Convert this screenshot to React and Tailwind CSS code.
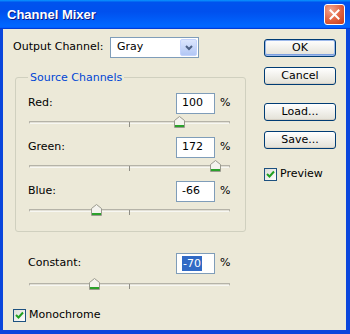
import React from 'react';

const font = { fontFamily: '"DejaVu Sans", Tahoma, sans-serif' };

function Thumb() {
    return (
        <svg width="11" height="12" viewBox="0 0 11 12">
            <path d="M0.5 4.5 L5.5 0.5 L10.5 4.5 L10.5 11.5 L0.5 11.5 Z" fill="#F4F3EE" stroke="#9A9A8E" />
            <rect x="1" y="9" width="9" height="2" fill="#2BA12B" />
        </svg>
    );
}

function Slider({ value, trackTop = 7 }) {
    // range -200..200, track 201px wide
    const left = Math.round(100 + (value / 200) * 100);
    return (
        <div className="relative h-[23px] w-[201px]">
            <div className="absolute left-0 right-0 h-[3px] rounded-[1px] border border-[#B5B3A8] border-b-[#F7F7F2] bg-[#E2E0D6]" style={{ top: trackTop }} />
            <div className="absolute left-[100px] w-px h-[5px] bg-[#8F8E86]" style={{ top: trackTop + 1 }} />
            <div className="absolute" style={{ left: left - 5, top: trackTop - 5 }}>
                <Thumb />
            </div>
        </div>
    );
}

function ValueBox({ value, selected }) {
    return (
        <div className="w-[39px] h-[21px] bg-white border border-[#7F9DB9] flex items-center pl-[5px]">
            {selected ? (
                <span className="bg-[#316AC5] text-white leading-[15px] px-px">{value}</span>
            ) : (
                <span>{value}</span>
            )}
        </div>
    );
}

function Channel({ label, value, selected, trackTop }) {
    return (
        <div className="flex flex-col">
            <div className="flex items-center h-[21px]">
                <span className="w-[148px]">{label}</span>
                <ValueBox value={value} selected={selected} />
                <span className="ml-[5px]">%</span>
            </div>
            <div className="ml-[1px]">
                <Slider value={value} trackTop={trackTop} />
            </div>
        </div>
    );
}

function Check({ label }) {
    return (
        <div className="flex items-center h-[14px]">
            <div className="w-[13px] h-[13px] border border-[#1C5180] bg-gradient-to-br from-[#DCDCD7] to-white flex items-center justify-center">
                <svg width="9" height="9" viewBox="0 0 9 9">
                    <path d="M1 4 L3.5 6.5 L8 1.5" fill="none" stroke="#21A121" strokeWidth="2" />
                </svg>
            </div>
            <span className="ml-[3px]">{label}</span>
        </div>
    );
}

function XpButton({ children, isDefault }) {
    return (
        <button
            className={
                'w-[72px] h-[18px] rounded-[3px] border border-[#003C74] bg-gradient-to-b from-white to-[#E3E1D7] flex items-center justify-center text-[11px] text-black ' +
                (isDefault ? 'shadow-[inset_0_0_0_1px_#9DB9EB,inset_0_-1px_0_1px_#7B9FE0]' : 'shadow-[inset_0_-1px_0_#D6D0C5]')
            }
        >
            {children}
        </button>
    );
}

export default function App() {
    return (
        <div className="w-[350px] h-[334px] flex flex-col bg-[#0A46DC] text-[11px] text-black" style={font}>
            {/* Title bar */}
            <div className="h-[29px] flex items-center justify-between pl-[7px] pr-[5px] bg-[linear-gradient(180deg,#0997ff,#0053ee_8%,#0050ee_40%,#0066ff_88%,#0066ff_93%,#005bff_95%,#003dd7_96%,#003dd7)]">
                <span
                    className="text-white font-bold text-[13px] [text-shadow:1px_1px_0_#0A1883]"
                    style={{ fontFamily: '"Liberation Sans", Arial, sans-serif' }}
                >
                    Channel Mixer
                </span>
                <div className="w-[21px] h-[21px] rounded-[3px] border border-white bg-[radial-gradient(circle_at_30%_25%,#F2A48D,#E0603E_55%,#C23A1A)] flex items-center justify-center">
                    <svg width="11" height="11" viewBox="0 0 11 11">
                        <path d="M1.5 1.5 L9.5 9.5 M9.5 1.5 L1.5 9.5" stroke="white" strokeWidth="2" strokeLinecap="square" />
                    </svg>
                </div>
            </div>

            {/* Body */}
            <div className="flex-1 ml-[3px] mr-[4px] mb-[4px] bg-[#ECE9D8] flex">
                <div className="w-[261px] pl-[10px] pt-[8px] flex flex-col">
                    <div className="flex items-center h-[21px]">
                        <span className="w-[97px]">Output Channel:</span>
                        <div className="w-[89px] h-[21px] bg-white border border-[#7F9DB9] flex items-center">
                            <span className="flex-1 pl-[6px]">Gray</span>
                            <div className="w-[17px] h-[17px] mr-px rounded-[2px] border border-[#C3D3FD] bg-gradient-to-b from-[#DCE6FE] to-[#B2C7F5] flex items-center justify-center">
                                <svg width="8" height="6" viewBox="0 0 8 6">
                                    <path d="M1 1 L4 4 L7 1" fill="none" stroke="#4D6185" strokeWidth="2" />
                                </svg>
                            </div>
                        </div>
                    </div>

                    <div className="relative ml-[2px] mt-[19px] w-[231px] border border-[#D0D0BF] rounded-[3px] pt-[15px] pb-[6px] pl-[12px]">
                        <span className="absolute left-[12px] -top-[7px] px-[2px] bg-[#ECE9D8] text-[#0046D5] leading-[13px]">
                            Source Channels
                        </span>
                        <Channel label="Red:" value={100} />
                        <Channel label="Green:" value={172} />
                        <Channel label="Blue:" value={-66} />
                    </div>

                    <div className="mt-[21px] pl-[15px]">
                        <Channel label="Constant:" value={-70} selected trackTop={9} />
                    </div>

                    <div className="mt-[11px]">
                        <Check label="Monochrome" />
                    </div>
                </div>

                <div className="flex flex-col pt-[10px]">
                    <XpButton isDefault>OK</XpButton>
                    <div className="mt-[10px]"><XpButton>Cancel</XpButton></div>
                    <div className="mt-[18px]"><XpButton>Load...</XpButton></div>
                    <div className="mt-[10px]"><XpButton>Save...</XpButton></div>
                    <div className="mt-[18px]"><Check label="Preview" /></div>
                </div>
            </div>
        </div>
    );
}
